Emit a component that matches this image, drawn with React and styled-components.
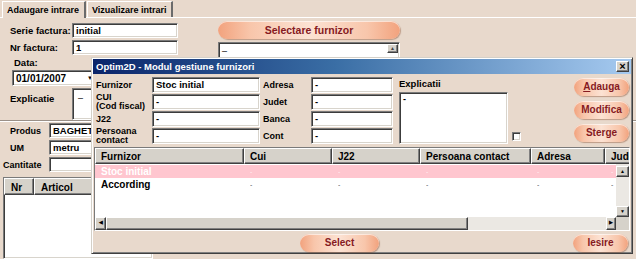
import React from "react";
import styled, { createGlobalStyle, css } from "styled-components";

const beige = "#e8d9cc";

const GlobalStyle = createGlobalStyle`
  html, body {
    margin: 0;
    padding: 0;
    background: ${beige};
  }
  body {
    font-family: "Liberation Sans", Arial, sans-serif;
  }
  * {
    box-sizing: border-box;
  }
`;

const sunken = css`
  background: #fff;
  border-style: solid;
  border-width: 1px;
  border-color: #7a7a7a #ffffff #ffffff #7a7a7a;
  box-shadow: inset 1px 1px 0 #3c3c3c, inset -1px -1px 0 #d8d4cc;
`;

const raised = css`
  background: #d6d2ca;
  border-style: solid;
  border-width: 1px;
  border-color: #ffffff #404040 #404040 #ffffff;
  box-shadow: inset -1px -1px 0 #808080;
`;

const columns = [
  { key: "furnizor", title: "Furnizor", width: 149 },
  { key: "cui", title: "Cui", width: 88 },
  { key: "j22", title: "J22", width: 88 },
  { key: "persoana", title: "Persoana contact", width: 111 },
  { key: "adresa", title: "Adresa", width: 74 },
  { key: "judet", title: "Judet", width: 60 },
];

const suppliers = [
  { furnizor: "Stoc initial", cui: "-", j22: "-", persoana: "-", adresa: "-", judet: "-", selected: true },
  { furnizor: "According", cui: "-", j22: "-", persoana: "-", adresa: "-", judet: "-" },
];

function App() {
  return (
    <>
      <GlobalStyle />
      <Screen>
        <TabBar>
          <Tab $active>Adaugare intrare</Tab>
          <Tab>Vizualizare intrari</Tab>
        </TabBar>

        <Panel>
          <TopArea>
            <InvoiceForm>
              <FieldRow>
                <FieldLabel>Serie factura:</FieldLabel>
                <TextBox>initial</TextBox>
              </FieldRow>
              <FieldRow>
                <FieldLabel>Nr factura:</FieldLabel>
                <TextBox>1</TextBox>
              </FieldRow>
              <DateLabel>Data:</DateLabel>
              <DateCombo>
                01/01/2007
                <ComboArrow>▼</ComboArrow>
              </DateCombo>
              <NotesRow>
                <NotesLabel>Explicatie</NotesLabel>
                <NotesBox>–</NotesBox>
              </NotesRow>
            </InvoiceForm>

            <SupplierBox>
              <PillButton $w={182} $size={10.5}>Selectare furnizor</PillButton>
              <ListBox>
                –
                <ScrollArrow>▲</ScrollArrow>
              </ListBox>
            </SupplierBox>
          </TopArea>

          <Divider />

          <ProductForm>
            <ProductRow>
              <ProductLabel>Produs</ProductLabel>
              <TextBox $caps>BAGHETA</TextBox>
            </ProductRow>
            <ProductRow>
              <ProductLabel>UM</ProductLabel>
              <TextBox>metru</TextBox>
            </ProductRow>
            <ProductRow>
              <ProductLabel $indent={3}>Cantitate</ProductLabel>
              <TextBox />
            </ProductRow>
          </ProductForm>

          <ItemGrid>
            <ItemHeader>
              <ItemHeadCell $w={30}>Nr</ItemHeadCell>
              <ItemHeadCell $w={90}>Articol</ItemHeadCell>
            </ItemHeader>
          </ItemGrid>
        </Panel>

        <Window>
          <TitleBar>
            <TitleText>Optim2D - Modul gestiune furnizori</TitleText>
            <CloseButton>×</CloseButton>
          </TitleBar>

          <WindowBody>
            <EditArea>
              <FieldsGrid>
                <DlgLabel>Furnizor</DlgLabel>
                <DlgInput>Stoc initial</DlgInput>
                <DlgLabel $pad>Adresa</DlgLabel>
                <DlgInput>-</DlgInput>

                <DlgLabel>
                  CUI
                  <br />
                  (Cod fiscal)
                </DlgLabel>
                <DlgInput>-</DlgInput>
                <DlgLabel $pad>Judet</DlgLabel>
                <DlgInput>-</DlgInput>

                <DlgLabel>J22</DlgLabel>
                <DlgInput>-</DlgInput>
                <DlgLabel $pad>Banca</DlgLabel>
                <DlgInput>-</DlgInput>

                <DlgLabel>
                  Persoana
                  <br />
                  contact
                </DlgLabel>
                <DlgInput>-</DlgInput>
                <DlgLabel $pad>Cont</DlgLabel>
                <DlgInput>-</DlgInput>
              </FieldsGrid>

              <NotesColumn>
                <NotesTitle>Explicatii</NotesTitle>
                <DlgNotes>-</DlgNotes>
              </NotesColumn>

              <CheckBox />

              <ActionColumn>
                <PillButton $w={55}>
                  <u>A</u>dauga
                </PillButton>
                <PillButton $w={55}>Modifica</PillButton>
                <PillButton $w={55}>Sterge</PillButton>
              </ActionColumn>
            </EditArea>

            <DataGrid>
              <GridHeader>
                {columns.map((c) => (
                  <HeadCell key={c.key} $w={c.width}>
                    {c.title}
                  </HeadCell>
                ))}
              </GridHeader>
              <GridBody>
                {suppliers.map((s) => (
                  <GridRow key={s.furnizor} $selected={s.selected}>
                    {columns.map((c) => (
                      <Cell key={c.key} $w={c.width} $dash={s[c.key] === "-"}>
                        {s[c.key]}
                      </Cell>
                    ))}
                  </GridRow>
                ))}
              </GridBody>
              <VScroll>
                <ScrollBtn $h={11}>▲</ScrollBtn>
                <ScrollTrack />
                <ScrollBtn $h={11}>▼</ScrollBtn>
              </VScroll>
              <HScroll>
                <ScrollBtn $w={11}>◀</ScrollBtn>
                <ScrollThumb $w={362} />
                <ScrollTrack />
                <ScrollBtn $w={10}>▶</ScrollBtn>
              </HScroll>
              <ScrollCorner />
            </DataGrid>

            <Footer>
              <PillButton $w={79} $offset={207}>
                Select
              </PillButton>
              <PillButton $w={55} $push>
                Iesire
              </PillButton>
            </Footer>
          </WindowBody>
        </Window>
      </Screen>
    </>
  );
}

/* ---------- background form ---------- */

const Screen = styled.div`
  position: relative;
  width: 636px;
  height: 259px;
  overflow: hidden;
  background: ${beige};
  color: #000;
  font-weight: bold;
  display: flex;
  flex-direction: column;
`;

const TabBar = styled.div`
  display: flex;
  align-items: flex-end;
  height: 17px;
  padding-left: 2px;
  flex-shrink: 0;
`;

const Tab = styled.div`
  height: ${(p) => (p.$active ? "17px" : "16px")};
  margin-bottom: ${(p) => (p.$active ? "-1px" : "0")};
  padding: 2px 5px 0 4px;
  font-size: 9px;
  line-height: 12px;
  background: ${beige};
  border-top: 1px solid #fff;
  border-left: 1px solid #fff;
  border-right: 2px solid #6b6b6b;
  position: relative;
  z-index: 1;
  margin-right: 1px;
`;

const Panel = styled.div`
  flex: 1;
  display: flex;
  flex-direction: column;
  border-top: 1px solid #fff;
`;

const TopArea = styled.div`
  display: flex;
  padding-top: 4px;
`;

const InvoiceForm = styled.div`
  width: 178px;
  padding-left: 10px;
  display: flex;
  flex-direction: column;
`;

const FieldRow = styled.div`
  display: flex;
  align-items: center;
  height: 16px;
  margin-bottom: 1px;
`;

const FieldLabel = styled.div`
  width: 62px;
  font-size: 9.5px;
`;

const TextBox = styled.div`
  ${sunken};
  flex: 1;
  height: ${(p) => (p.$h ? p.$h : 15)}px;
  padding: 1px 3px;
  font-size: ${(p) => (p.$caps ? 9.5 : 9.5)}px;
  line-height: 11px;
  white-space: nowrap;
  overflow: hidden;
`;

const DateLabel = styled.div`
  height: 13px;
  padding-left: 4px;
  font-size: 9.5px;
  line-height: 13px;
`;

const DateCombo = styled.div`
  ${sunken};
  position: relative;
  margin: 1px 0 0 2px;
  width: 84px;
  height: 16px;
  padding: 2px 3px;
  font-size: 10px;
  line-height: 11px;
`;

const ComboArrow = styled.span`
  position: absolute;
  right: 2px;
  top: 2px;
  font-size: 6px;
`;

const NotesRow = styled.div`
  display: flex;
  margin-top: 2px;
`;

const NotesLabel = styled.div`
  width: 62px;
  padding-top: 5px;
  font-size: 9.5px;
`;

const NotesBox = styled.div`
  ${sunken};
  flex: 1;
  height: 32px;
  padding: 4px 5px;
  font-size: 9px;
  font-weight: normal;
`;

const SupplierBox = styled.div`
  margin: -1px 0 0 40px;
  width: 182px;
  display: flex;
  flex-direction: column;
  gap: 3px;
`;

const ListBox = styled.div`
  ${sunken};
  position: relative;
  height: 17px;
  padding: 3px 3px;
  font-size: 9px;
  font-weight: normal;
`;

const ScrollArrow = styled.span`
  ${raised};
  position: absolute;
  right: 1px;
  top: 1px;
  width: 11px;
  height: 9px;
  font-size: 5px;
  line-height: 7px;
  text-align: center;
  color: #444;
`;

const Divider = styled.div`
  height: 2px;
  border-top: 1px solid #9a9088;
  border-bottom: 1px solid #fff;
`;

const ProductForm = styled.div`
  width: 160px;
  padding-top: 1px;
  display: flex;
  flex-direction: column;
  gap: 2px;
`;

const ProductRow = styled.div`
  display: flex;
  align-items: center;
  height: 15px;
`;

const ProductLabel = styled.div`
  width: 49px;
  padding-left: ${(p) => (p.$indent ?? 10)}px;
  font-size: 9px;
`;

const ItemGrid = styled.div`
  ${sunken};
  flex: 1;
  margin: 5px 0 0 3px;
  width: 150px;
`;

const ItemHeader = styled.div`
  display: flex;
  height: 17px;
`;

const ItemHeadCell = styled.div`
  ${raised};
  width: ${(p) => p.$w}px;
  padding: 3px 0 0 6px;
  font-size: 10px;
`;

/* ---------- supplier window ---------- */

const Window = styled.div`
  position: absolute;
  left: 91px;
  top: 57px;
  width: 542px;
  height: 197px;
  background: ${beige};
  border: 1px solid;
  border-color: #d4d0c8 #404040 #404040 #d4d0c8;
  box-shadow: inset 1px 1px 0 #fff, inset -1px -1px 0 #808080;
  padding: 1px;
  display: flex;
  flex-direction: column;
`;

const TitleBar = styled.div`
  height: 15px;
  display: flex;
  align-items: center;
  justify-content: space-between;
  padding: 0 2px 0 3px;
  background: linear-gradient(to right, #0a246a, #3a6ea5 45%, #a6caf0);
`;

const TitleText = styled.span`
  color: #fff;
  font-size: 9.5px;
`;

const CloseButton = styled.span`
  ${raised};
  width: 13px;
  height: 11px;
  font-size: 11px;
  line-height: 8px;
  text-align: center;
  color: #000;
`;

const WindowBody = styled.div`
  flex: 1;
  display: flex;
  flex-direction: column;
`;

const EditArea = styled.div`
  display: flex;
  margin-top: 3px;
  padding-right: 2px;
`;

const FieldsGrid = styled.div`
  display: grid;
  grid-template-columns: 59px 108px 51px 82px;
  grid-template-rows: repeat(4, 16px);
  row-gap: 1px;
`;

const DlgLabel = styled.div`
  display: flex;
  align-items: center;
  padding-left: ${(p) => (p.$pad ? 3 : 3)}px;
  font-size: 9px;
  line-height: 9px;
`;

const DlgInput = styled.div`
  ${sunken};
  padding: 2px 3px;
  font-size: 9.5px;
  line-height: 10px;
  white-space: nowrap;
`;

const NotesColumn = styled.div`
  margin-left: 6px;
  width: 109px;
  display: flex;
  flex-direction: column;
`;

const NotesTitle = styled.div`
  height: 15px;
  font-size: 9.5px;
  line-height: 14px;
`;

const DlgNotes = styled.div`
  ${sunken};
  height: 52px;
  padding: 2px 3px;
  font-size: 9px;
  line-height: 9px;
`;

const CheckBox = styled.div`
  ${sunken};
  align-self: flex-end;
  margin: 0 0 3px 4px;
  width: 9px;
  height: 9px;
`;

const ActionColumn = styled.div`
  margin: 1px 0 0 auto;
  display: flex;
  flex-direction: column;
  gap: 5px;
`;

const PillButton = styled.div`
  width: ${(p) => p.$w}px;
  height: 18px;
  margin-left: ${(p) => (p.$push ? "auto" : `${p.$offset || 0}px`)};
  border-radius: 9px;
  background: linear-gradient(
    to right,
    #f2a27d 0%,
    #f8c6ab 18%,
    #fce2d3 50%,
    #f8c6ab 82%,
    #f2a27d 100%
  );
  box-shadow: 1px 1px 1px rgba(140, 80, 50, 0.45), inset 0 1px 0 rgba(255, 255, 255, 0.6);
  color: #861a1f;
  font-size: ${(p) => p.$size || 10}px;
  line-height: 18px;
  text-align: center;
  white-space: nowrap;
  flex-shrink: 0;
`;

const DataGrid = styled.div`
  ${sunken};
  margin: 3px 0 0 1px;
  width: 536px;
  height: 84px;
  display: grid;
  grid-template-columns: 1fr 13px;
  grid-template-rows: 16px 1fr 13px;
  overflow: hidden;
`;

const GridHeader = styled.div`
  grid-column: 1 / 3;
  display: flex;
  overflow: hidden;
`;

const HeadCell = styled.div`
  ${raised};
  flex-shrink: 0;
  width: ${(p) => p.$w}px;
  padding: 2px 0 0 5px;
  font-size: 10px;
  line-height: 11px;
  white-space: nowrap;
  overflow: hidden;
`;

const GridBody = styled.div`
  background: #fff;
  overflow: hidden;
  padding-top: 1px;
`;

const GridRow = styled.div`
  display: flex;
  height: 13px;
  background: ${(p) => (p.$selected ? "#ffc6cf" : "#fff")};
  color: ${(p) => (p.$selected ? "#fff" : "#000")};
`;

const Cell = styled.div`
  flex-shrink: 0;
  width: ${(p) => p.$w}px;
  padding-left: 6px;
  font-size: ${(p) => (p.$dash ? 7 : 10)}px;
  font-weight: ${(p) => (p.$dash ? "normal" : "bold")};
  line-height: 13px;
  white-space: nowrap;
  overflow: hidden;
  opacity: ${(p) => (p.$dash ? 0.7 : 1)};
`;

const VScroll = styled.div`
  display: flex;
  flex-direction: column;
  background: #ebe8e3;
  padding-top: 2px;
`;

const HScroll = styled.div`
  display: flex;
  background: #ebe8e3;
`;

const ScrollBtn = styled.div`
  ${raised};
  flex-shrink: 0;
  width: ${(p) => (p.$w ? `${p.$w}px` : "100%")};
  height: ${(p) => (p.$h ? `${p.$h}px` : "100%")};
  font-size: 5px;
  line-height: 9px;
  text-align: center;
  color: #000;
`;

const ScrollThumb = styled.div`
  ${raised};
  width: ${(p) => p.$w}px;
`;

const ScrollTrack = styled.div`
  flex: 1;
  background: #ebe8e3;
`;

const ScrollCorner = styled.div`
  background: #d6d2ca;
`;

const Footer = styled.div`
  display: flex;
  align-items: center;
  margin-top: 3px;
  padding-right: 3px;
`;

export default App;
